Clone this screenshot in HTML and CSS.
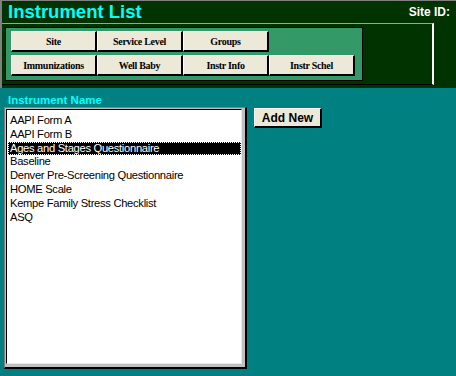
FILE: index.html
```html
<!DOCTYPE html>
<html>
<head>
<meta charset="utf-8">
<link rel="stylesheet" href="styles.css">
</head>
<body>
<div class="window">
  <header class="header">
    <div class="title-row">
      <h1 class="title">Instrument List</h1>
      <span class="site-id">Site ID:</span>
    </div>
    <div class="frame">
      <div class="nav-panel">
        <div class="nav-grid">
          <button class="nav-btn">Site</button>
          <button class="nav-btn">Service Level</button>
          <button class="nav-btn">Groups</button>
          <span class="nav-empty"></span>
          <button class="nav-btn">Immunizations</button>
          <button class="nav-btn">Well Baby</button>
          <button class="nav-btn">Instr Info</button>
          <button class="nav-btn">Instr Schel</button>
        </div>
      </div>
    </div>
  </header>
  <main class="content">
    <div class="label">Instrument Name</div>
    <div class="list-row">
      <div class="listbox">
        <ul class="list">
          <li class="item">AAPI Form A</li>
          <li class="item">AAPI Form B</li>
          <li class="item selected">Ages and Stages Questionnaire</li>
          <li class="item">Baseline</li>
          <li class="item">Denver Pre-Screening Questionnaire</li>
          <li class="item">HOME Scale</li>
          <li class="item">Kempe Family Stress Checklist</li>
          <li class="item">ASQ</li>
        </ul>
      </div>
      <button class="add-btn">Add New</button>
    </div>
  </main>
</div>
</body>
</html>
```

FILE: styles.css
```css
html, body {
  margin: 0;
  padding: 0;
}
body {
  width: 456px;
  height: 376px;
  overflow: hidden;
  background: #008080;
  font-family: "Liberation Sans", Arial, sans-serif;
}
.window {
  width: 456px;
  height: 376px;
  display: flex;
  flex-direction: column;
}
.header {
  background: #003300;
  height: 88px;
  box-sizing: border-box;
  border-top: 1px solid #808080;
  border-left: 2px solid #808080;
}
.title-row {
  height: 22px;
  display: flex;
  justify-content: space-between;
  align-items: flex-start;
}
.title {
  margin: 0 0 0 6px;
  font-size: 18.5px;
  line-height: 22px;
  font-weight: bold;
  color: #00ffff;
}
.site-id {
  color: #ffffff;
  font-weight: bold;
  font-size: 12px;
  line-height: 12px;
  margin-top: 5px;
  margin-right: 6px;
}
.frame {
  width: 432px;
  height: 62px;
  box-sizing: border-box;
  border-top: 1px solid #a0a0a0;
  border-right: 2px solid #ffffff;
  border-bottom: 1px solid #000000;
  padding: 3px 0 0 3px;
}
.nav-panel {
  width: 358px;
  height: 54px;
  box-sizing: border-box;
  background: #339966;
  border: 1px solid #000000;
  padding: 3px 0 0 5px;
}
.nav-grid {
  display: grid;
  grid-template-columns: 86px 86px 86px 86px;
  grid-template-rows: 21px 21px;
  row-gap: 3px;
}
.nav-btn {
  margin: 0;
  padding: 0;
  box-sizing: border-box;
  background: #ece9d8;
  border-style: solid;
  border-width: 1px 2px 2px 1px;
  border-color: #ffffff #000000 #000000 #ffffff;
  font-family: "Liberation Serif", "Times New Roman", serif;
  font-weight: bold;
  font-size: 10px;
  letter-spacing: -0.3px;
  color: #000000;
}
.content {
  flex: 1;
  padding: 6px 0 0 4px;
}
.label {
  color: #00ffff;
  font-weight: bold;
  font-size: 11.5px;
  line-height: 13px;
  margin-left: 4px;
}
.list-row {
  display: flex;
  align-items: flex-start;
}
.listbox {
  width: 243px;
  height: 262px;
  box-sizing: border-box;
  background: #c0c0c0;
  border-style: solid;
  border-width: 1px 2px 2px 1px;
  border-color: #808080 #000000 #000000 #808080;
  padding: 1px 3px 3px 1px;
}
.list {
  margin: 0;
  padding: 4px 0 0 2px;
  list-style: none;
  height: 100%;
  box-sizing: border-box;
  background: #ffffff;
  border-style: solid;
  border-width: 1px;
  border-color: #000000 #ece9d8 #ece9d8 #000000;
}
.item {
  font-size: 11.2px;
  letter-spacing: -0.3px;
  line-height: 13.8px;
  height: 13.8px;
  color: #000000;
  white-space: nowrap;
  padding-left: 1px;
}
.item.selected {
  background: #000000;
  color: #ffffff;
  outline: 1px dotted #ffffff;
  outline-offset: -1px;
  margin-left: -1px;
  padding-left: 2px;
}
.add-btn {
  margin: 1px 0 0 7px;
  padding: 0;
  width: 68px;
  height: 20px;
  box-sizing: border-box;
  background: #ece9d8;
  border-style: solid;
  border-width: 1px 2px 2px 1px;
  border-color: #ffffff #000000 #000000 #ffffff;
  font-family: "Liberation Sans", Arial, sans-serif;
  font-weight: bold;
  font-size: 12px;
  color: #000000;
}
```
